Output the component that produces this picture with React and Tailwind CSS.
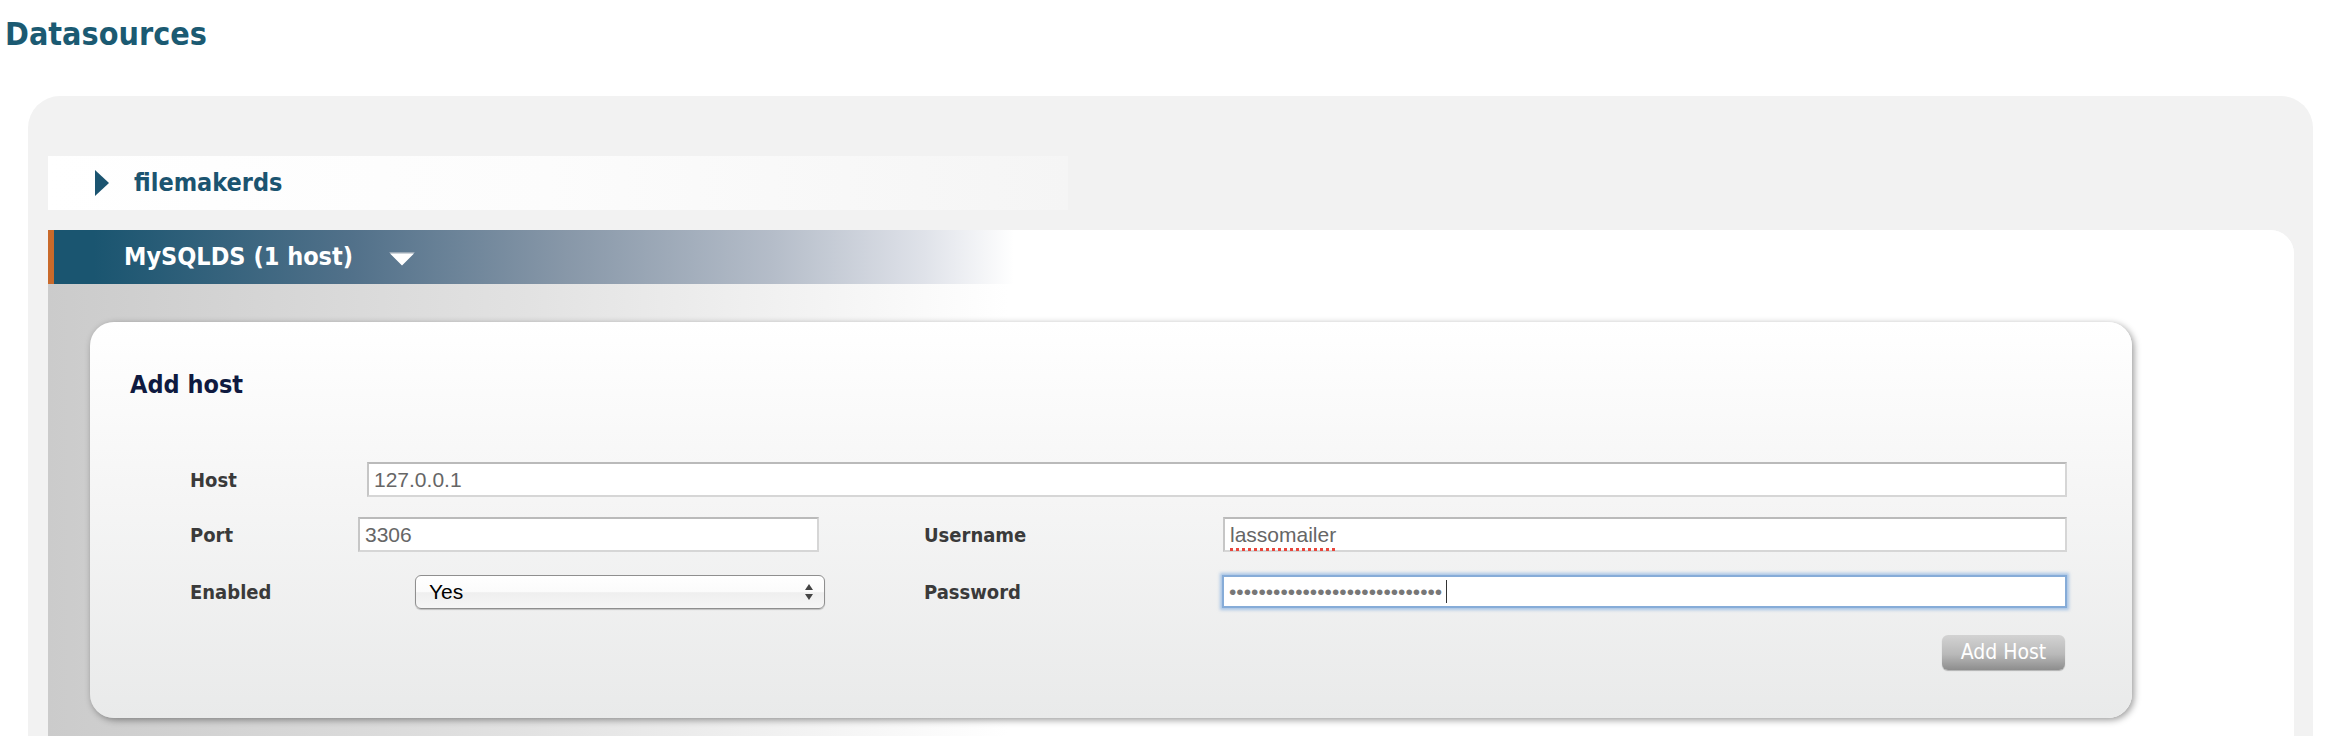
import React, { useState } from 'react';

const head = "font-['DejaVu_Sans_Condensed','DejaVu_Sans',sans-serif]";
const field = "font-['Liberation_Sans',Arial,sans-serif]";

const inputCls = `h-[35px] bg-white border-2 border-[#d6d6d6] border-t-[#bababa] border-l-[#c6c6c6] px-[5px] text-[21px] text-[#666] outline-none ${field}`;

const App = () => {
  const [form, setForm] = useState({
    host: '127.0.0.1',
    port: '3306',
    enabled: 'Yes',
    username: 'lassomailer',
    password: 'xxxxxxxxxxxxxxxxxxxxxxxxxxxxx'
  });

  const handleChange = (e) => {
    const { name, value } = e.target;
    setForm(prev => ({ ...prev, [name]: value }));
  };

  return (
    <div className="min-h-screen bg-white overflow-hidden">
      {/* page title */}
      <h1 className={`pl-[5px] pt-[15px] text-[32px] leading-[38px] font-bold text-[#1b5a72] ${head}`}>
        Datasources
      </h1>

      {/* outer gray panel */}
      <div className="mt-[43px] ml-[28px] mr-[27px] bg-[#f2f2f2] rounded-t-[32px] pt-[60px] pl-[20px] pr-[19px]">
        {/* collapsed datasource */}
        <div className="h-[54px] w-[1020px] flex items-center pl-[47px] bg-[linear-gradient(to_right,#ffffff,#fcfcfc_500px,#f5f5f5)]">
          <svg width="14" height="26" viewBox="0 0 14 26">
            <path d="M0 0 L14 13 L0 26 Z" fill="#1b5470" />
          </svg>
          <span className={`ml-[25px] text-[25px] font-bold text-[#1b5470] ${head}`}>filemakerds</span>
        </div>

        {/* expanded datasource */}
        <div className="mt-[20px] rounded-tr-[24px] overflow-hidden bg-[linear-gradient(to_right,#cbcbcb,#e2e2e2_480px,#ffffff_960px)]">
          <div className="h-[54px] flex items-center border-l-[6px] border-[#c96a2b] pl-[70px] bg-[linear-gradient(to_right,#1a5570_40px,#52718a_300px,#8797a8_510px,#b5bdc9_720px,#dfe2e9_870px,#ffffff_960px)]">
            <span className={`text-[25px] font-bold text-white ${head}`}>MySQLDS (1 host)</span>
            <svg className="ml-[36px] mt-[4px]" width="26" height="14" viewBox="0 0 26 14">
              <path d="M0 0 L26 0 L13 13 Z" fill="#9aa8b5" />
              <path d="M1 1.5 L25 1.5 L13 13.5 Z" fill="#ffffff" />
            </svg>
          </div>

          <div className="pt-[38px] pl-[42px] pr-[162px] pb-[40px]">
            {/* add host card */}
            <div className="rounded-[24px] bg-[linear-gradient(to_bottom,#ffffff,#f5f5f5_45%,#e9eaea)] shadow-[2px_2px_7px_rgba(0,0,0,0.4)] pt-[48px] pb-[48px] pl-[40px] pr-[65px]">
              <h2 className={`text-[25px] leading-[30px] font-bold text-[#0f1a40] ${head}`}>Add host</h2>

              <div className="mt-[62px] pl-[60px]">
                {/* host */}
                <div className="flex items-center h-[35px]">
                  <label className={`w-[177px] text-[20px] font-bold text-[#3a3a3a] ${head}`}>Host</label>
                  <input name="host" value={form.host} onChange={handleChange} className={`flex-1 ${inputCls}`} />
                </div>

                {/* port / username */}
                <div className="flex items-center h-[35px] mt-[20px]">
                  <label className={`w-[168px] text-[20px] font-bold text-[#3a3a3a] ${head}`}>Port</label>
                  <input name="port" value={form.port} onChange={handleChange} className={`w-[461px] ${inputCls}`} />
                  <label className={`ml-[105px] w-[299px] text-[20px] font-bold text-[#3a3a3a] ${head}`}>Username</label>
                  <div className="relative flex-1 flex">
                    <input name="username" value={form.username} onChange={handleChange} className={`flex-1 ${inputCls}`} />
                    {/* spell-check marks */}
                    <span className={`absolute left-[7px] top-[4px] pointer-events-none text-[21px] text-transparent underline decoration-dotted decoration-[#e8463c] decoration-[3px] underline-offset-[4px] ${field}`}>
                      {form.username}
                    </span>
                  </div>
                </div>

                {/* enabled / password */}
                <div className="flex items-center h-[35px] mt-[22px]">
                  <label className={`w-[225px] text-[20px] font-bold text-[#3a3a3a] ${head}`}>Enabled</label>
                  <div className="relative w-[410px] h-[34px]">
                    <select
                      name="enabled"
                      value={form.enabled}
                      onChange={handleChange}
                      className={`appearance-none w-full h-full rounded-[6px] border border-[#8f8f8f] pl-[13px] text-[21px] text-black outline-none shadow-[0_1px_1px_rgba(0,0,0,0.2)] bg-[linear-gradient(to_bottom,#ffffff,#fbfbfb_50%,#efefef_52%,#f6f6f6)] ${field}`}
                    >
                      <option>Yes</option>
                      <option>No</option>
                    </select>
                    <svg className="absolute right-[12px] top-[9px] pointer-events-none" width="8" height="16" viewBox="0 0 8 16">
                      <path d="M4 0 L8 6 L0 6 Z" fill="#444" />
                      <path d="M0 10 L8 10 L4 16 Z" fill="#444" />
                    </svg>
                  </div>
                  <label className={`ml-[99px] w-[298px] text-[20px] font-bold text-[#3a3a3a] ${head}`}>Password</label>
                  <div className="relative flex-1 flex">
                    <input
                      type="password"
                      name="password"
                      value={form.password}
                      onChange={handleChange}
                      className={`flex-1 h-[33px] bg-white border-2 border-[#86acd8] px-[5px] text-[21px] text-[#777] outline-none shadow-[0_0_3px_2px_rgba(110,160,220,0.55)] ${field}`}
                    />
                    {/* caret */}
                    <span className="absolute left-[224px] top-[5px] w-px h-[23px] bg-[#333] pointer-events-none" />
                  </div>
                </div>

                {/* submit */}
                <div className="flex justify-end mt-[26px]">
                  <button
                    className={`mr-[2px] w-[123px] h-[35px] rounded-[6px] text-[21px] text-white bg-[linear-gradient(to_bottom,#d3d3d3,#b9b9b9_55%,#8d8d8d)] shadow-[0_1px_1px_rgba(0,0,0,0.25)] ${head}`}
                  >
                    Add Host
                  </button>
                </div>
              </div>
            </div>
          </div>
        </div>
      </div>
    </div>
  );
};

export default App;
